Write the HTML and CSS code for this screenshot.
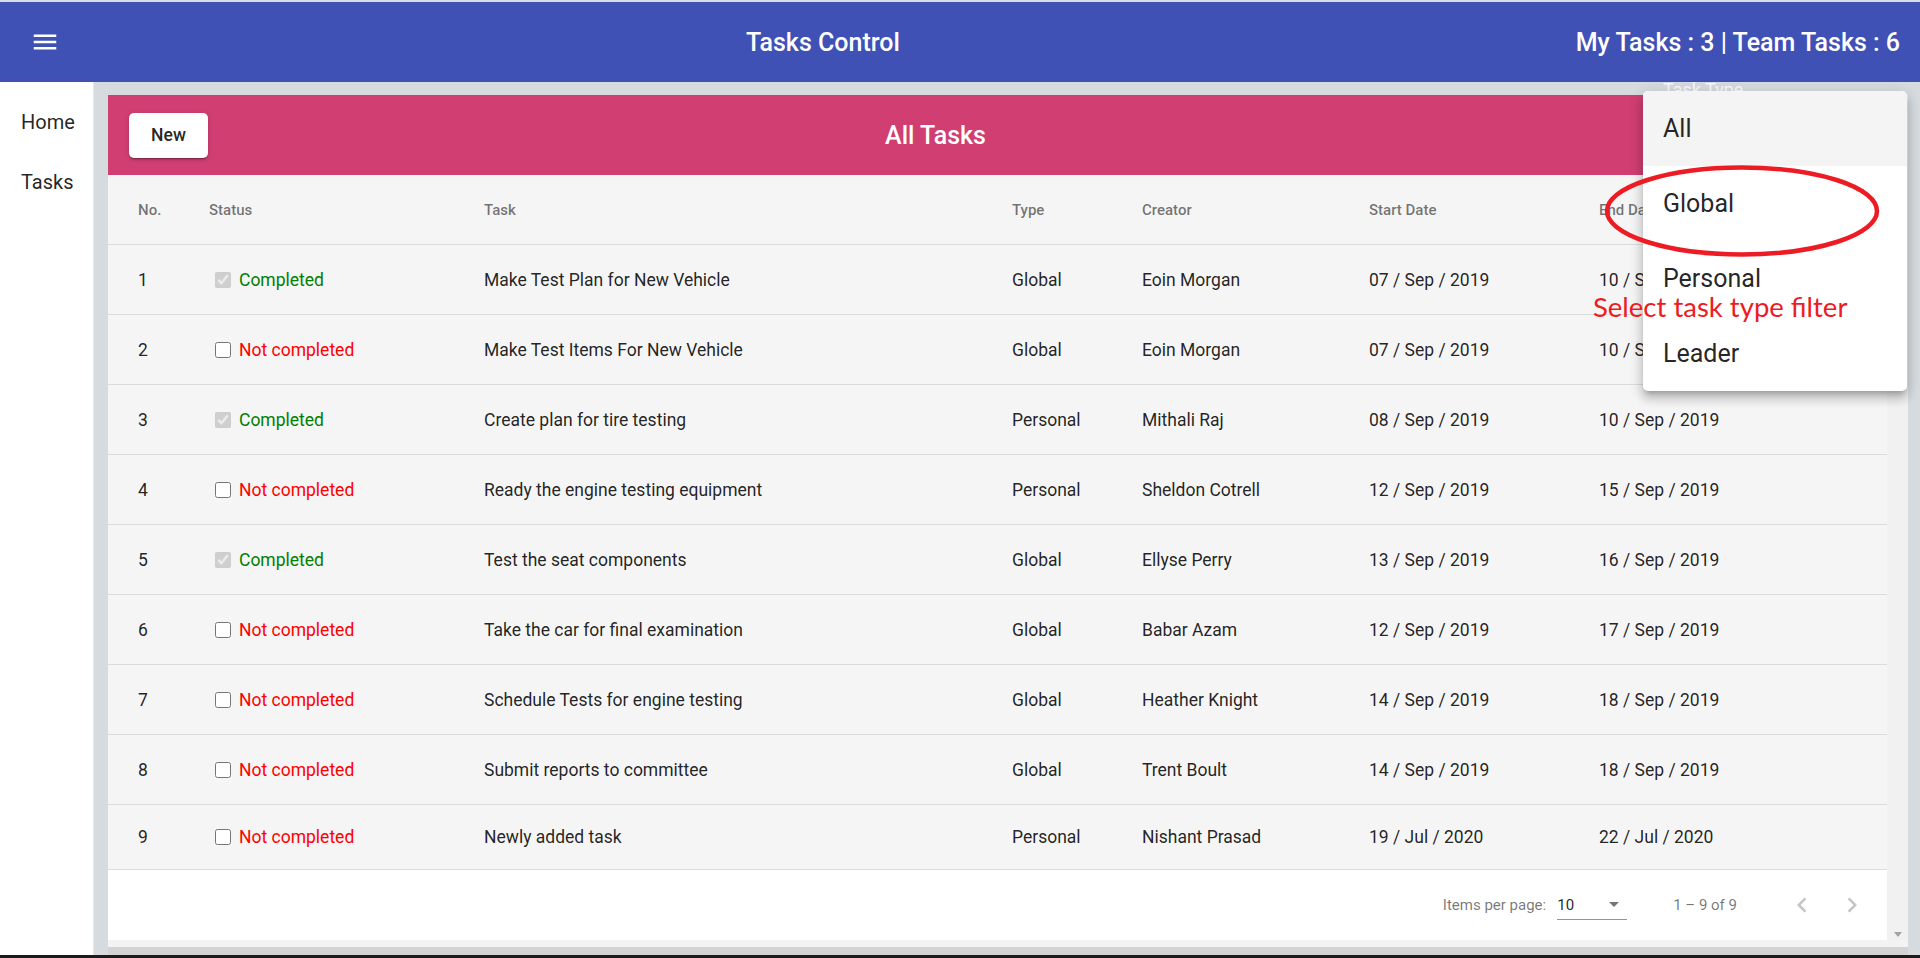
FILE: index.html
```html
<!DOCTYPE html>
<html>
<head>
<meta charset="utf-8">
<title>Tasks Control</title>
<link rel="stylesheet" href="styles.css">
</head>
<body>
<div class="topline"></div>
<header class="appbar">
  <button class="menu-btn" aria-label="menu">
    <svg viewBox="0 0 24 24" width="30" height="30"><path d="M3 18h18v-2H3v2zm0-5h18v-2H3v2zm0-7v2h18V6H3z" fill="#fff"/></svg>
  </button>
  <span class="spacer"></span>
  <h1 class="app-title">Tasks Control</h1>
  <span class="spacer"></span>
  <div class="counts">My Tasks : 3 | Team Tasks : 6</div>
</header>
<div class="main">
  <nav class="sidenav">
    <a class="nav-item">Home</a>
    <a class="nav-item">Tasks</a>
  </nav>
  <section class="content">
    <div class="scroll-area">
      <div class="card">
        <div class="card-toolbar">
          <button class="new-btn">New</button>
          <span class="spacer"></span>
          <h2 class="card-title">All Tasks</h2>
          <span class="spacer"></span>
          <div class="type-field"></div>
        </div>
        <div class="table">
          <div class="row head"><span>No.</span><span>Status</span><span>Task</span><span>Type</span><span>Creator</span><span>Start Date</span><span>End Date</span></div>
          <div class="row"><span>1</span><span class="status"><input type="checkbox" checked disabled><span class="done">Completed</span></span><span>Make Test Plan for New Vehicle</span><span>Global</span><span>Eoin Morgan</span><span>07 / Sep / 2019</span><span>10 / Sep / 2019</span></div>
          <div class="row"><span>2</span><span class="status"><input type="checkbox"><span class="todo">Not completed</span></span><span>Make Test Items For New Vehicle</span><span>Global</span><span>Eoin Morgan</span><span>07 / Sep / 2019</span><span>10 / Sep / 2019</span></div>
          <div class="row"><span>3</span><span class="status"><input type="checkbox" checked disabled><span class="done">Completed</span></span><span>Create plan for tire testing</span><span>Personal</span><span>Mithali Raj</span><span>08 / Sep / 2019</span><span>10 / Sep / 2019</span></div>
          <div class="row"><span>4</span><span class="status"><input type="checkbox"><span class="todo">Not completed</span></span><span>Ready the engine testing equipment</span><span>Personal</span><span>Sheldon Cotrell</span><span>12 / Sep / 2019</span><span>15 / Sep / 2019</span></div>
          <div class="row"><span>5</span><span class="status"><input type="checkbox" checked disabled><span class="done">Completed</span></span><span>Test the seat components</span><span>Global</span><span>Ellyse Perry</span><span>13 / Sep / 2019</span><span>16 / Sep / 2019</span></div>
          <div class="row"><span>6</span><span class="status"><input type="checkbox"><span class="todo">Not completed</span></span><span>Take the car for final examination</span><span>Global</span><span>Babar Azam</span><span>12 / Sep / 2019</span><span>17 / Sep / 2019</span></div>
          <div class="row"><span>7</span><span class="status"><input type="checkbox"><span class="todo">Not completed</span></span><span>Schedule Tests for engine testing</span><span>Global</span><span>Heather Knight</span><span>14 / Sep / 2019</span><span>18 / Sep / 2019</span></div>
          <div class="row"><span>8</span><span class="status"><input type="checkbox"><span class="todo">Not completed</span></span><span>Submit reports to committee</span><span>Global</span><span>Trent Boult</span><span>14 / Sep / 2019</span><span>18 / Sep / 2019</span></div>
          <div class="row last"><span>9</span><span class="status"><input type="checkbox"><span class="todo">Not completed</span></span><span>Newly added task</span><span>Personal</span><span>Nishant Prasad</span><span>19 / Jul / 2020</span><span>22 / Jul / 2020</span></div>
        </div>
        <div class="paginator">
          <span class="pg-label">Items per page:</span>
          <div class="pg-select"><span class="pg-value">10</span><span class="pg-arrow"></span></div>
          <span class="pg-range">1 – 9 of 9</span>
          <button class="pg-btn" aria-label="previous page"><svg viewBox="0 0 24 24" width="30" height="30"><path d="M15.41 7.41L14 6l-6 6 6 6 1.41-1.41L10.83 12z" fill="#c4c4c4"/></svg></button>
          <button class="pg-btn" aria-label="next page"><svg viewBox="0 0 24 24" width="30" height="30"><path d="M10 6L8.59 7.41 13.17 12l-4.58 4.59L10 18l6-6z" fill="#c4c4c4"/></svg></button>
        </div>
      </div>
      <div class="vscroll"><span class="vscroll-arrow"></span></div>
    </div>
    <div class="hscroll"></div>
  </section>
</div>
<div class="taskbar"></div>

<span class="float-label">Task Type</span>
<div class="select-panel">
  <div class="option active">All</div>
  <div class="option">Global</div>
  <div class="option">Personal</div>
  <div class="option">Leader</div>
</div>
<svg class="annot-ellipse" width="280" height="96" viewBox="0 0 280 96"><ellipse cx="139" cy="47" rx="135" ry="43.5" fill="none" stroke="#ed1c24" stroke-width="4.5"/></svg>
<div class="annot-text">Select task type filter</div>
</body>
</html>
```

FILE: styles.css
```css
* { box-sizing: border-box; }
html, body { margin: 0; padding: 0; }
body {
  width: 1920px;
  height: 958px;
  overflow: hidden;
  position: relative;
  font-family: Roboto, "Liberation Sans", sans-serif;
  background: #d6dbdf;
}
.topline { height: 2px; background: #d9dde1; }
.appbar {
  height: 80px;
  background: #3f51b5;
  color: #fff;
  display: flex;
  align-items: center;
  padding: 0 20px;
}
.menu-btn {
  width: 50px; height: 50px;
  border: 0; background: none; padding: 0;
  display: flex; align-items: center; justify-content: center;
}
.spacer { flex: 1; }
.app-title, .counts, .card-title {
  margin: 0;
  font-size: 25px;
  font-weight: 500;
  white-space: nowrap;
}
.main { display: flex; height: 873px; }
.sidenav {
  width: 94px;
  flex: none;
  background: #fff;
  border-right: 1px solid #e8e8e8;
  padding-top: 10px;
  display: flex;
  flex-direction: column;
}
.nav-item {
  height: 60px;
  display: flex;
  align-items: center;
  padding-left: 21px;
  font-size: 20px;
  color: rgba(0,0,0,.87);
}
.content {
  flex: 1;
  padding: 13px 12px 0 14px;
  display: flex;
  flex-direction: column;
}
.scroll-area { display: flex; height: 845px; }
.card {
  flex: 1;
  display: flex;
  flex-direction: column;
  background: #f5f5f5;
}
.card-toolbar {
  height: 80px;
  flex: none;
  background: #d03e72;
  color: #fff;
  display: flex;
  align-items: center;
  padding: 0 20px 0 21px;
}
.new-btn {
  width: 79px; height: 45px;
  background: #fff;
  border: 0;
  border-radius: 5px;
  font-family: Roboto, sans-serif;
  font-size: 17.5px;
  font-weight: 500;
  color: rgba(0,0,0,.87);
  box-shadow: 0 3px 1px -2px rgba(0,0,0,.2), 0 2px 2px 0 rgba(0,0,0,.14), 0 1px 5px 0 rgba(0,0,0,.12);
}
.type-field { width: 204px; height: 50px; }
.table { background: #f5f5f5; }
.row {
  display: grid;
  grid-template-columns: 71px 275px 528px 130px 227px 230px 1fr;
  align-items: center;
  height: 70px;
  padding: 0 30px;
  border-bottom: 1px solid #dcdcdc;
  font-size: 17.5px;
  color: rgba(0,0,0,.87);
  white-space: nowrap;
}
.row.head { font-size: 15px; font-weight: 500; color: rgba(0,0,0,.54); }
.row.last { height: 65px; }
.status { display: flex; align-items: center; }
.status input { width: 16px; height: 16px; margin: 0 8px 0 6px; }
.done { color: #008000; }
.todo { color: #f00; }
.paginator {
  height: 70px;
  background: #fff;
  display: flex;
  align-items: center;
  justify-content: flex-end;
  padding-right: 10px;
  font-size: 15px;
  color: rgba(0,0,0,.54);
}
.pg-label { margin-right: 11px; }
.pg-select {
  width: 70px;
  height: 29px;
  display: flex;
  align-items: center;
  justify-content: space-between;
  padding-right: 8px;
  border-bottom: 1px solid #949494;
  color: rgba(0,0,0,.87);
}
.pg-arrow {
  width: 0; height: 0;
  border-left: 5px solid transparent;
  border-right: 5px solid transparent;
  border-top: 5px solid #757575;
}
.pg-range { margin: 0 40px 0 46px; }
.pg-btn {
  width: 50px; height: 50px;
  border: 0; background: none; padding: 0;
  display: flex; align-items: center; justify-content: center;
}
.vscroll {
  width: 21px;
  flex: none;
  background: #f1f1f1;
  display: flex;
  flex-direction: column;
  justify-content: flex-end;
  align-items: center;
  padding-bottom: 3px;
}
.vscroll-arrow {
  width: 0; height: 0;
  border-left: 4.5px solid transparent;
  border-right: 4.5px solid transparent;
  border-top: 5px solid #a3a3a3;
}
.hscroll {
  height: 15px;
  background: linear-gradient(#f3f3f3 0 7px, #d3d3d3 7px);
}
.taskbar { height: 3px; background: #1b1b1b; }

.float-label {
  position: absolute;
  left: 1663px;
  top: 81px;
  font-size: 18px;
  line-height: 18px;
  color: rgba(255,255,255,.85);
  z-index: 1;
}
.select-panel {
  position: absolute;
  left: 1643px;
  top: 91px;
  width: 264px;
  height: 300px;
  background: #fff;
  border-radius: 5px;
  overflow: hidden;
  z-index: 2;
  box-shadow: 0 5px 5px -3px rgba(0,0,0,.2), 0 8px 10px 1px rgba(0,0,0,.14), 0 3px 14px 2px rgba(0,0,0,.12);
}
.option {
  height: 75px;
  display: flex;
  align-items: center;
  padding-left: 20px;
  font-size: 25px;
  color: rgba(0,0,0,.87);
}
.option.active { background: #f4f4f4; }
.annot-ellipse {
  position: absolute;
  left: 1603px;
  top: 164px;
  z-index: 3;
}
.annot-text {
  position: absolute;
  left: 1593px;
  top: 293px;
  font-family: Lato, "Noto Sans", sans-serif;
  font-size: 27.5px;
  line-height: 27px;
  color: #ed1c24;
  white-space: nowrap;
  z-index: 3;
}
```
